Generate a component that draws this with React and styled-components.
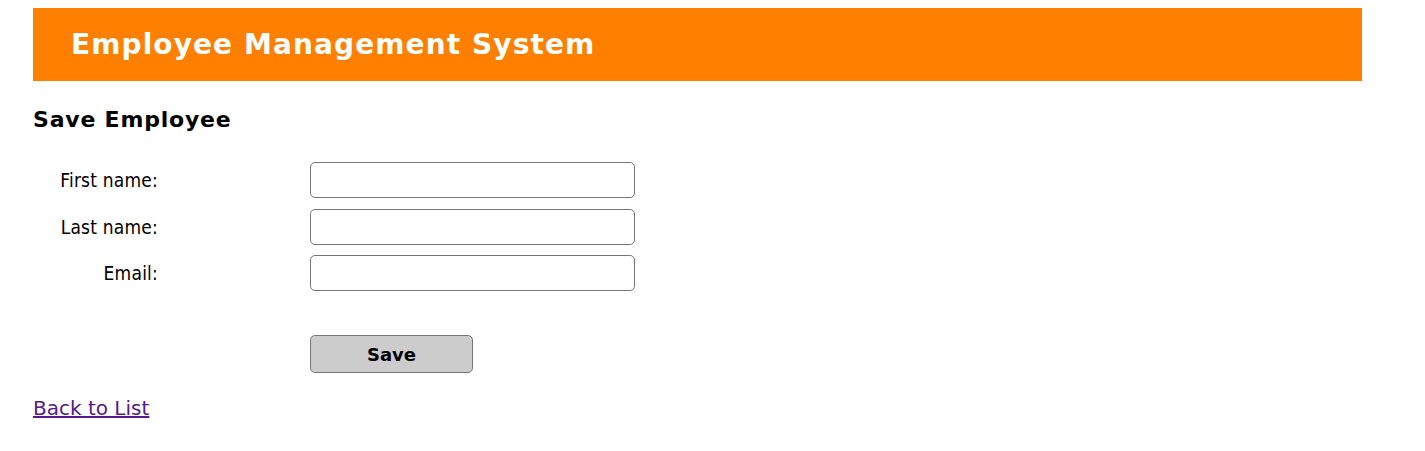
import React from "react";
import styled, { createGlobalStyle } from "styled-components";

const Global = createGlobalStyle`
  body {
    margin: 8px;
    background: #fff;
    font-family: "DejaVu Sans", Verdana, sans-serif;
    color: #000;
  }
`;

const Page = styled.div`
  margin-left: 25px;
  width: 1329px;
`;

const Header = styled.header`
  background: #ff8000;
  height: 74px;
  display: flex;
  align-items: center;
  padding-left: 38px;
  margin-top: -1px;
`;

const Title = styled.h1`
  margin: 0;
  color: #fff;
  font-size: 28px;
  letter-spacing: 1.1px;
  font-weight: bold;
  font-family: "DejaVu Sans", Verdana, sans-serif;
`;

const Heading = styled.h2`
  margin: 25px 0 0;
  font-size: 22px;
  letter-spacing: 0.8px;
  font-weight: bold;
  line-height: 28px;
`;

const Form = styled.form`
  margin-top: 28px;
  display: grid;
  grid-template-columns: 125px 325px;
  column-gap: 152px;
  row-gap: 10.5px;
  align-items: center;
`;

const Label = styled.label`
  text-align: right;
  font-family: "DejaVu Sans Condensed", Tahoma, sans-serif;
  font-size: 19px;
  letter-spacing: 0.2px;
`;

const Input = styled.input`
  box-sizing: border-box;
  width: 325px;
  height: 36px;
  border: 1px solid #767676;
  border-radius: 5px;
  padding: 0 8px;
  font-size: 16px;
  background: #fff;
`;

const Spacer = styled.div`
  grid-column: 1 / -1;
  height: 23px;
`;

const SaveButton = styled.button`
  grid-column: 2;
  box-sizing: border-box;
  width: 163px;
  height: 38px;
  background: #cccccc;
  border: 1px solid #777;
  border-radius: 5px;
  font-family: "DejaVu Sans", Verdana, sans-serif;
  font-weight: bold;
  font-size: 18px;
  color: #000;
`;

const BackLink = styled.a`
  display: inline-block;
  margin-top: 23px;
  font-size: 20px;
  color: #551a8b;
  text-decoration: underline;
`;

export default function App() {
  return (
    <>
      <Global />
      <Page>
        <Header>
          <Title>Employee Management System</Title>
        </Header>
        <Heading>Save Employee</Heading>
        <Form onSubmit={(e) => e.preventDefault()}>
          <Label>First name:</Label>
          <Input type="text" />
          <Label>Last name:</Label>
          <Input type="text" />
          <Label>Email:</Label>
          <Input type="text" />
          <Spacer />
          <SaveButton type="submit">Save</SaveButton>
        </Form>
        <BackLink href="#list">Back to List</BackLink>
      </Page>
    </>
  );
}
